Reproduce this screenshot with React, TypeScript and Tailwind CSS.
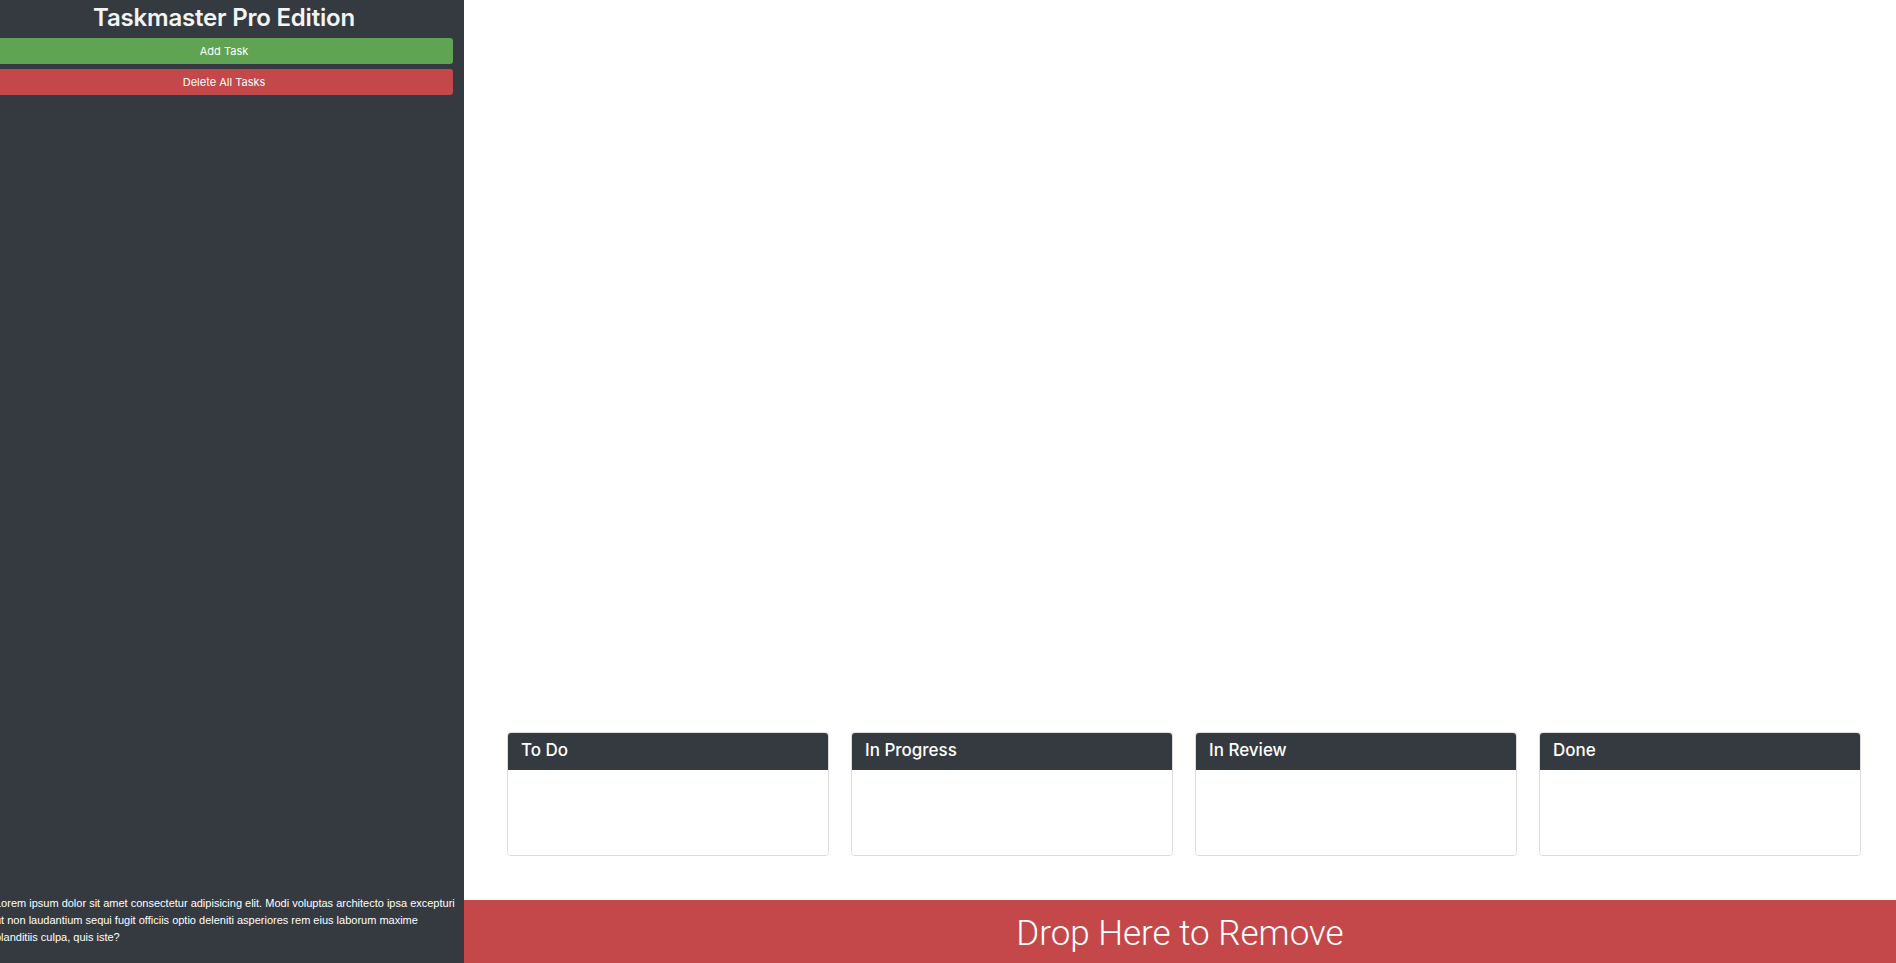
import React from "react";

const columns = ["To Do", "In Progress", "In Review", "Done"];

export default function App() {
  return (
    <div className="flex h-[963px] w-full overflow-hidden bg-white" style={{ fontFamily: "Inter, 'Liberation Sans', sans-serif" }}>
      <aside className="flex w-[464px] shrink-0 flex-col justify-between overflow-hidden bg-[#353a41]">
        <div className="-ml-[5px] flex w-[458px] flex-col">
          <h1 className="h-[34px] pt-[2px] text-center text-[24px] font-semibold leading-[32px] tracking-[-0.2px] text-[#f3f4f6]">
            Taskmaster Pro Edition
          </h1>
          <button className="mt-[4px] h-[26px] w-full rounded-[3px] bg-[#5ea453] text-[11px] text-white">
            Add Task
          </button>
          <button className="mt-[5px] h-[26px] w-full rounded-[3px] bg-[#c4484a] text-[11px] text-white">
            Delete All Tasks
          </button>
        </div>
        <p
          className="-ml-[5px] mb-[17px] w-[462px] text-[11px] leading-[17px] text-white"
          style={{ fontFamily: "'Liberation Sans', Arial, sans-serif" }}
        >
          Lorem ipsum dolor sit amet consectetur adipisicing elit. Modi voluptas architecto ipsa excepturi ut non laudantium sequi fugit officiis optio deleniti asperiores rem eius laborum maxime blanditiis culpa, quis iste?
        </p>
      </aside>
      <main className="flex min-w-0 flex-1 flex-col">
        <div className="flex flex-1 flex-col justify-end pb-[44px] pl-[43px] pr-[35px]">
          <div className="grid grid-cols-4 gap-[22px]">
            {columns.map((c) => (
              <div key={c} className="overflow-hidden rounded-[4px] border border-[#dcdcdc]">
                <div className="flex h-[37px] items-center bg-[#353a41] px-[13px] pb-[1px] text-[17px] font-medium text-white">
                  {c}
                </div>
                <div className="h-[85px] bg-white" />
              </div>
            ))}
          </div>
        </div>
        <div
          className="flex h-[63px] items-center justify-center bg-[#c4484a] pt-[6px] text-[35px] font-light text-white"
          style={{ fontFamily: "Roboto, 'Liberation Sans', sans-serif" }}
        >
          Drop Here to Remove
        </div>
      </main>
    </div>
  );
}
